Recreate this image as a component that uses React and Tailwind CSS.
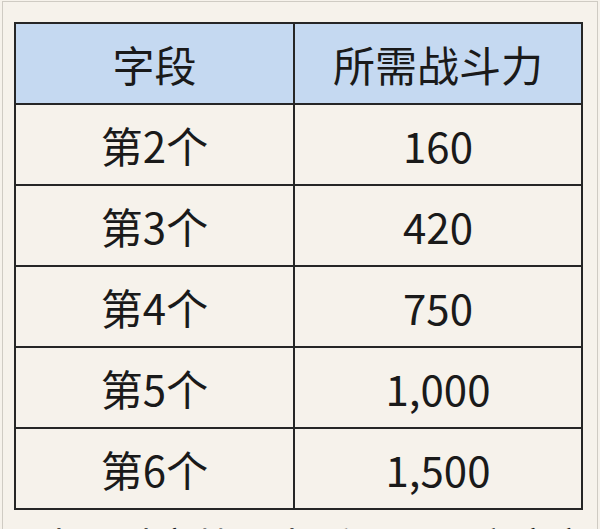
import React from "react"

const rows = [
  ["第2个", "160"],
  ["第3个", "420"],
  ["第4个", "750"],
  ["第5个", "1,000"],
  ["第6个", "1,500"],
]

const font = { fontFamily: '"Noto Sans CJK SC", "Noto Sans", sans-serif' }

const Row = ({ left, right, header }) => (
  <div
    className={
      "grid grid-cols-[279px_1fr] h-[81px] border-t-2 border-[#262626] first:border-t-0 first:h-[79px] " +
      (header ? "bg-[#c5d9f1]" : "bg-[#f6f2eb]")
    }
  >
    <div className="flex items-center justify-center border-r-2 border-[#262626]">{left}</div>
    <div className="flex items-center justify-center">{right}</div>
  </div>
)

export default function App() {
  return (
    <div className="w-[600px] h-[529px] overflow-hidden bg-[#f6f2eb] text-[#1a1a1a]" style={font}>
      <div className="ml-[2px] mt-[1px] w-[596px] h-[560px] border border-[#cfcbc3] pl-[11px] pt-[20px]">
        <div className="w-[569px] border-2 border-[#262626] text-[42px] leading-none">
          <Row left="字段" right="所需战斗力" header />
          {rows.map(([l, r]) => (
            <Row key={l} left={l} right={r} />
          ))}
        </div>
        <p className="mt-[15px] ml-[20px] text-[40px] leading-none whitespace-nowrap">
          达到对应战斗力后即可开启字段
        </p>
      </div>
    </div>
  )
}
